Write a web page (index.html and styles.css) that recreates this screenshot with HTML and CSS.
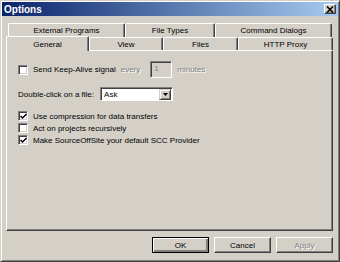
FILE: index.html
```html
<!DOCTYPE html>
<html lang="en">
<head>
  <meta charset="UTF-8"/>
  <title>Options</title>
  <link rel="stylesheet" href="styles.css">
</head>
<body>

<div class="window">
  <div class="titlebar">
    <span class="title">Options</span>
    <span class="close">
      <svg width="8" height="7" viewBox="0 0 8 7"><path d="M1 0.5 L7 6.5 M7 0.5 L1 6.5" stroke="#000" stroke-width="1.6"/></svg>
    </span>
  </div>

  <div class="sheet">
    <div class="tab-row back">
      <div class="tab t-ext">External Programs</div>
      <div class="tab t-types">File Types</div>
      <div class="tab t-cmd">Command Dialogs</div>
    </div>
    <div class="tab-row front">
      <div class="tab active t-general">General</div>
      <div class="tab t-view">View</div>
      <div class="tab t-files">Files</div>
      <div class="tab t-proxy">HTTP Proxy</div>
    </div>

    <div class="panel">
      <div class="row keepalive">
        <label class="check"><span class="box"></span>Send Keep-Alive signal</label>
        <span class="dim every">every</span>
        <span class="field">1</span>
        <span class="dim">minutes</span>
      </div>

      <div class="row dblclick">
        <span>Double-click on a file:</span>
        <span class="combo">
          <span class="combo-value">Ask</span>
          <span class="combo-btn">
            <svg width="5" height="3" viewBox="0 0 5 3"><path d="M0 0 H5 L2.5 3 Z" fill="#000"/></svg>
          </span>
        </span>
      </div>

      <div class="checks">
        <label class="check"><span class="box"><svg width="7" height="7" viewBox="0 0 7 7"><path d="M0.5 3 L2.5 5 L6.5 1" stroke="#000" stroke-width="1.5" fill="none"/></svg></span>Use compression for data transfers</label>
        <label class="check"><span class="box"></span>Act on projects recursively</label>
        <label class="check"><span class="box"><svg width="7" height="7" viewBox="0 0 7 7"><path d="M0.5 3 L2.5 5 L6.5 1" stroke="#000" stroke-width="1.5" fill="none"/></svg></span>Make SourceOffSite your default SCC Provider</label>
      </div>
    </div>
  </div>

  <div class="buttons">
    <button class="btn default">OK</button>
    <button class="btn">Cancel</button>
    <button class="btn" disabled>Apply</button>
  </div>
</div>

</body>
</html>
```

FILE: styles.css
```css
body {
  margin: 0;
  font-family: 'Liberation Sans', Arial, sans-serif;
  font-size: 8px;
  color: #000;
  background: #d4d0c8;
}
.window {
  width: 340px; height: 262px;
  box-sizing: border-box;
  background: #d4d0c8;
  border: 1px solid;
  border-color: #d4d0c8 #404040 #404040 #d4d0c8;
  box-shadow: inset 1px 1px #fff, inset -1px -1px #808080;
  padding: 1px;
}

/* title bar */
.titlebar {
  height: 14px;
  display: flex; align-items: center; justify-content: space-between;
  padding: 0 2px 0 2px;
  background: linear-gradient(to right, #0a246a, #a6caf0);
}
.title { color: #fff; font-weight: bold; font-size: 10px; }
.close {
  width: 12px; height: 10px; box-sizing: border-box;
  display: flex; align-items: center; justify-content: center;
  background: #d4d0c8;
  border: 1px solid; border-color: #fff #404040 #404040 #fff;
  box-shadow: inset -1px -1px #808080;
}

/* tabs */
.sheet { margin: 7px 5px 0 4px; }
.tab-row { display: flex; }
.tab-row.back { height: 14px; padding: 0 1px 0 2px; }
.tab-row.front { height: 14px; margin-top: -1px; position: relative; z-index: 1; }
.tab {
  box-sizing: border-box;
  display: flex; align-items: center; justify-content: center;
  background: #d4d0c8;
  border-top: 1px solid #fff; border-left: 1px solid #fff;
  border-right: 1px solid #404040;
  box-shadow: inset -1px 0 #808080;
  border-radius: 2px 2px 0 0;
}
.front .tab { margin-top: 1px; }
.front .tab.active { margin-top: 0; height: 15px; }
.t-ext { width: 117px; }
.t-types { width: 90px; }
.t-cmd { width: 117px; }
.t-general { width: 83px; }
.t-view { width: 74px; }
.t-files { width: 75px; }
.t-proxy { width: 95px; }

.panel {
  height: 181px; box-sizing: border-box;
  border: 1px solid; border-color: #fff #404040 #404040 #fff;
  box-shadow: inset -1px -1px #808080;
  padding: 10px 11px 0 11px;
}

.row { display: flex; align-items: center; }
.keepalive { height: 17px; }
.check { display: flex; align-items: center; height: 12px; }
.box {
  width: 10px; height: 10px; box-sizing: border-box;
  margin-right: 5px;
  display: flex; align-items: center; justify-content: center;
  background: #fff;
  border: 1px solid; border-color: #808080 #fff #fff #808080;
  box-shadow: inset 1px 1px #404040, inset -1px -1px #d4d0c8;
}
.dim { color: #808080; text-shadow: 1px 1px #fff; }
.every { margin-left: 5px; }
.field {
  width: 22px; height: 17px; box-sizing: border-box;
  margin: 0 5px 0 10px; padding: 2px 3px;
  color: #808080;
  border: 1px solid; border-color: #808080 #fff #fff #808080;
  box-shadow: inset 1px 1px #404040, inset -1px -1px #d4d0c8;
}

.dblclick { margin-top: 9px; height: 14px; }
.combo {
  margin-left: 6px;
  width: 73px; height: 14px; box-sizing: border-box;
  display: flex; align-items: center;
  background: #fff;
  border: 1px solid; border-color: #808080 #fff #fff #808080;
  box-shadow: inset 1px 1px #404040;
  padding: 1px 1px 0 3px;
}
.combo-value { flex: 1; }
.combo-btn {
  width: 12px; height: 11px; box-sizing: border-box;
  display: flex; align-items: center; justify-content: center;
  background: #d4d0c8;
  border: 1px solid; border-color: #d4d0c8 #404040 #404040 #d4d0c8;
  box-shadow: inset 1px 1px #fff, inset -1px -1px #808080;
}

.checks { margin-top: 9px; }

/* buttons */
.buttons {
  display: flex; justify-content: flex-end; gap: 5px;
  margin: 6px 5px 0 0;
}
.btn {
  width: 57px; height: 16px; box-sizing: border-box;
  font: inherit; padding: 0;
  background: #d4d0c8;
  border: 1px solid; border-color: #fff #404040 #404040 #fff;
  box-shadow: inset -1px -1px #808080;
}
.btn.default {
  border-color: #000;
  box-shadow: inset 1px 1px #fff, inset -2px -2px #808080, inset -1px -1px #404040;
}
.btn:disabled { color: #808080; text-shadow: 1px 1px #fff; }
```
